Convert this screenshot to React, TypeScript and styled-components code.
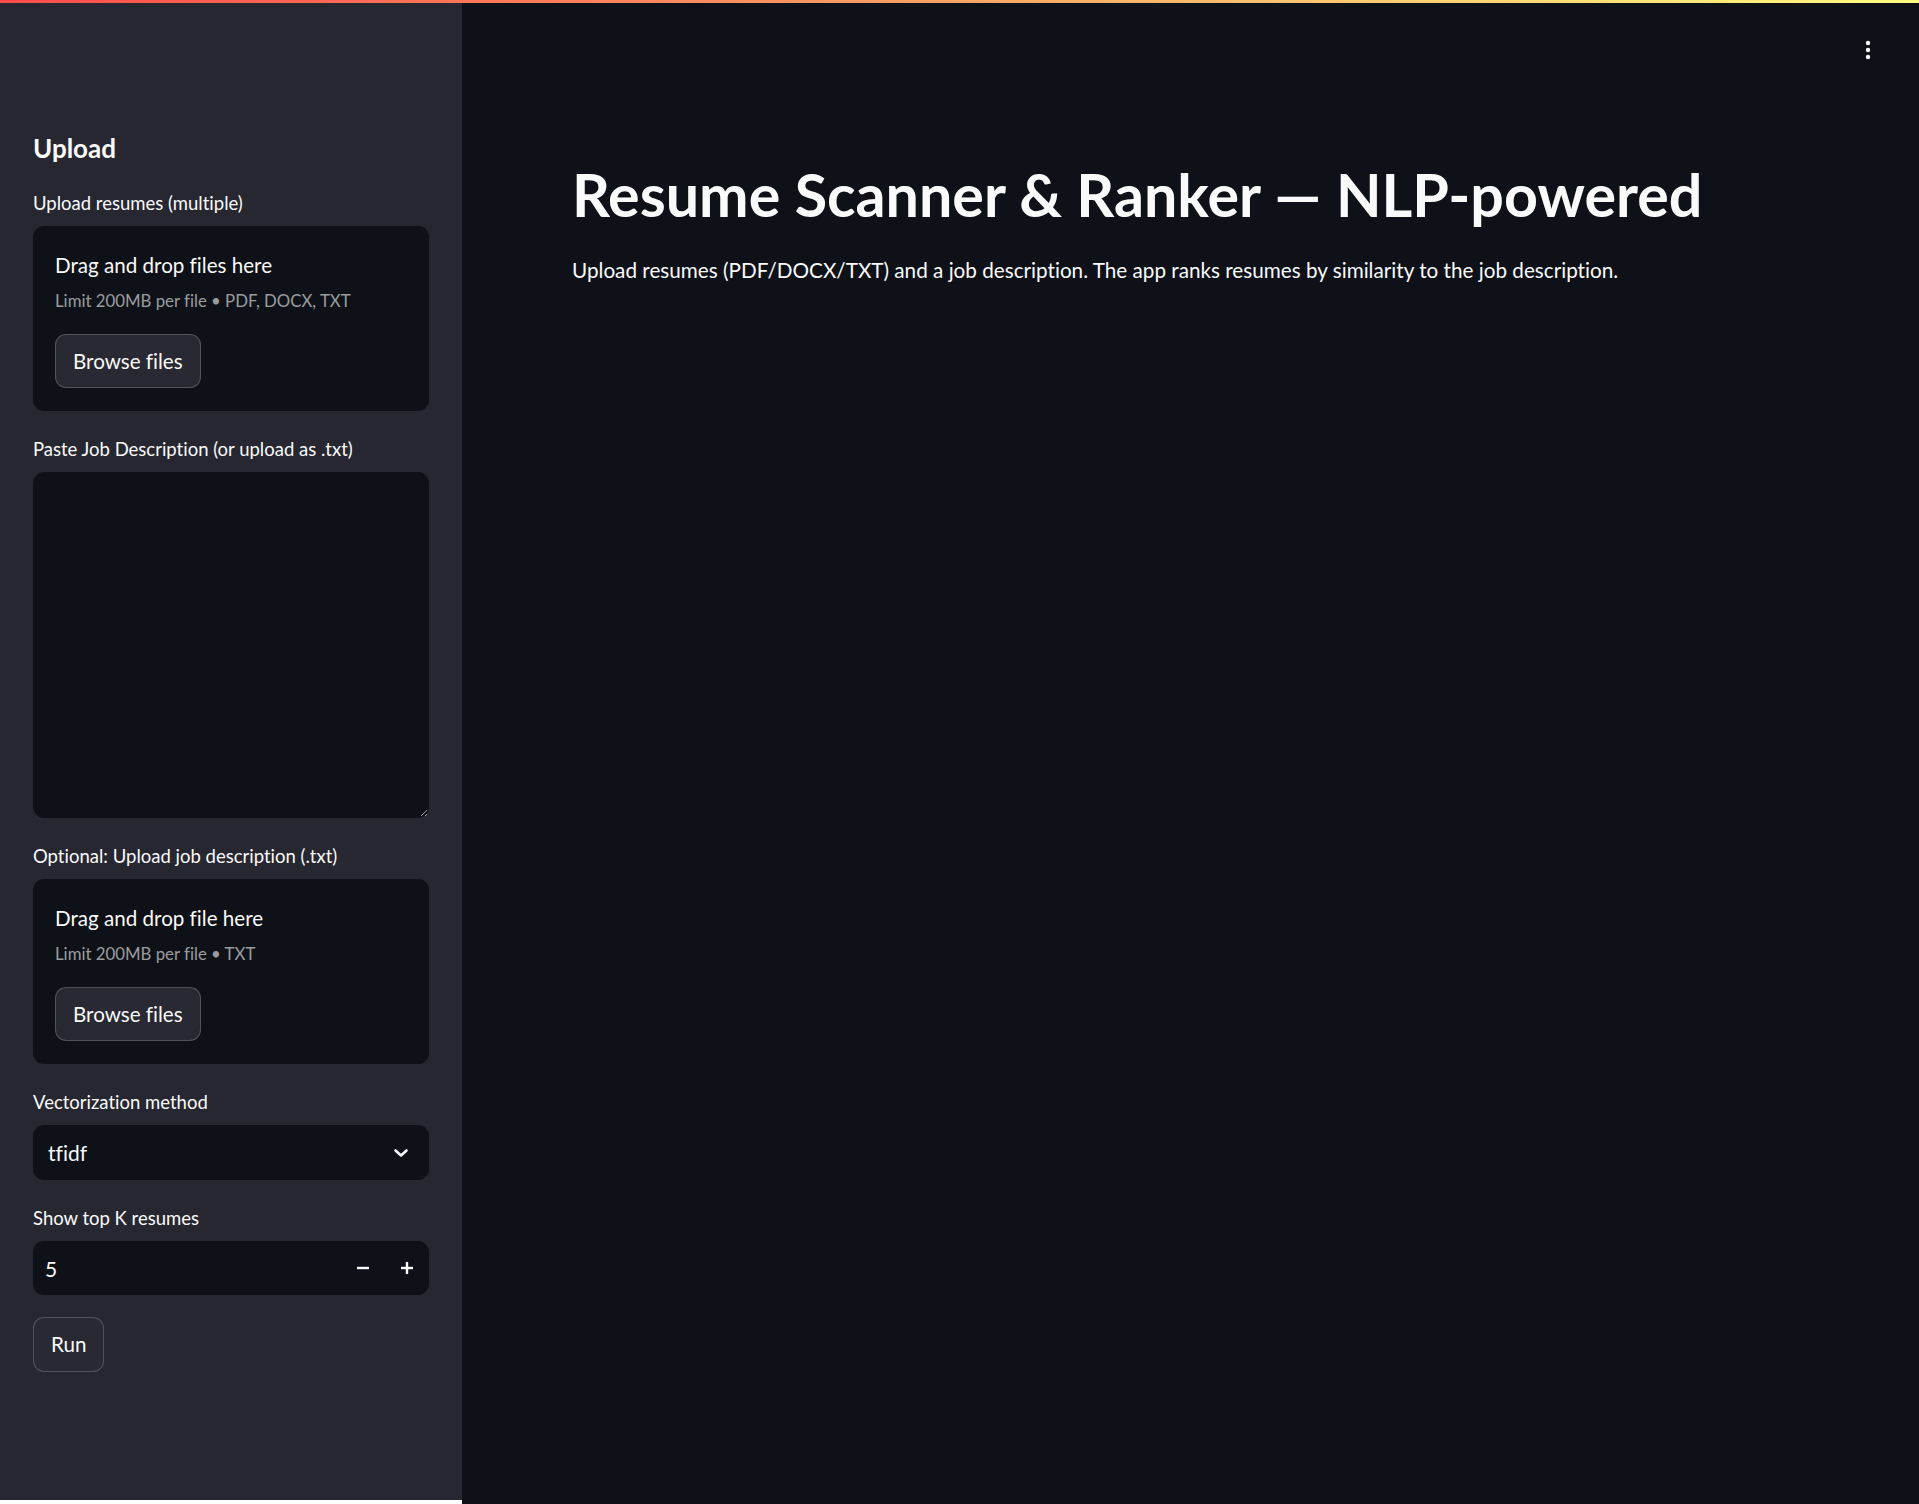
import React from 'react';
import styled, { createGlobalStyle } from 'styled-components';

const GlobalStyle = createGlobalStyle`
  html, body {
    margin: 0;
    padding: 0;
    background: #ffffff;
    overflow: hidden;
  }
  body {
    font-family: Lato, "Noto Sans", sans-serif;
    color: #fafafa;
    font-variant-ligatures: none;
  }
  * {
    box-sizing: border-box;
  }
`;

const Page = styled.div`
  width: 1919px;
  height: 1504px;
  display: flex;
  flex-direction: column;
`;

const Decoration = styled.div`
  height: 3px;
  flex-shrink: 0;
  background: linear-gradient(90deg, #ff4b4b, #fffd80);
`;

const Layout = styled.div`
  flex: 1;
  display: flex;
  align-items: flex-start;
`;

const Sidebar = styled.aside`
  width: 462px;
  height: 1497px;
  flex-shrink: 0;
  background: #262730;
  padding: 129px 33px 0;
  display: flex;
  flex-direction: column;
`;

const SideHeading = styled.h2`
  margin: 0 0 25px;
  font-size: 26px;
  line-height: 32px;
  font-weight: 700;
`;

const Stack = styled.div`
  display: flex;
  flex-direction: column;
  gap: 24px;
`;

const Field = styled.div`
  display: flex;
  flex-direction: column;
`;

const Label = styled.label`
  font-size: 18.5px;
  line-height: 28px;
  margin-bottom: 9px;
  color: #fafafa;
`;

const Dropzone = styled.div`
  height: 185px;
  background: #0e1117;
  border-radius: 11px;
  padding: 24px 22px 23px;
  display: flex;
  flex-direction: column;
  align-items: flex-start;
`;

const DropTitle = styled.div`
  font-size: 20.6px;
  line-height: 30px;
`;

const DropHint = styled.div`
  margin-top: 8px;
  font-size: 16.8px;
  line-height: 26px;
  color: rgba(250, 250, 250, 0.6);
`;

const Button = styled.button<{ $top?: number; $height?: number }>`
  height: ${(p) => p.$height ?? 54}px;
  margin-top: ${(p) => p.$top ?? 0}px;
  padding: 0 17px;
  border-radius: 11px;
  border: 1px solid rgba(250, 250, 250, 0.2);
  background: #282932;
  color: #fafafa;
  font-family: inherit;
  font-variant-ligatures: none;
  font-size: 20.6px;
  line-height: 1;
  cursor: pointer;
  align-self: flex-start;
`;

const TextArea = styled.textarea`
  height: 346px;
  width: 100%;
  resize: vertical;
  background: #0f1119;
  border: 1px solid #0f1119;
  border-radius: 11px;
  color: #fafafa;
  font-family: inherit;
  font-size: 21px;
  padding: 14px 16px;
  outline: none;
  color-scheme: dark;
`;

const Select = styled.div`
  height: 55px;
  background: #0e1117;
  border-radius: 11px;
  padding: 0 18px 0 15px;
  display: flex;
  align-items: center;
  justify-content: space-between;
  font-size: 21px;
`;

const NumberBox = styled.div`
  height: 54px;
  background: #0e1117;
  border-radius: 11px;
  display: flex;
  align-items: center;
  font-size: 21px;
  overflow: hidden;
`;

const NumberValue = styled.div`
  flex: 1;
  padding-left: 12px;
`;

const StepButton = styled.button`
  width: 44px;
  height: 100%;
  border: none;
  background: transparent;
  display: flex;
  align-items: center;
  justify-content: center;
  padding: 0;
  cursor: pointer;
`;

const Main = styled.main`
  flex: 1;
  height: 1501px;
  background: #0e1117;
  display: flex;
  flex-direction: column;
`;

const Toolbar = styled.header`
  height: 94px;
  display: flex;
  align-items: center;
  justify-content: flex-end;
  padding-right: 39px;
`;

const Content = styled.section`
  padding: 0 110px;
`;

const Title = styled.h1`
  margin: 63px 0 0;
  font-size: 59.2px;
  line-height: 69px;
  font-weight: 700;
  color: #fafafa;
  white-space: nowrap;
`;

const Intro = styled.p`
  margin: 24px 0 0;
  font-size: 20.7px;
  line-height: 34px;
  color: #fafafa;
`;

const Chevron = () => (
  <svg width="20" height="20" viewBox="0 0 20 20" fill="none">
    <path d="M4.5 7.5L10 12.5L15.5 7.5" stroke="#fafafa" strokeWidth="2.6" strokeLinecap="round" strokeLinejoin="round" />
  </svg>
);

const Minus = () => (
  <svg width="14" height="14" viewBox="0 0 14 14">
    <rect x="1" y="5.8" width="12" height="2.4" fill="#fafafa" />
  </svg>
);

const Plus = () => (
  <svg width="14" height="14" viewBox="0 0 14 14">
    <rect x="1" y="5.8" width="12" height="2.4" fill="#fafafa" />
    <rect x="5.8" y="1" width="2.4" height="12" fill="#fafafa" />
  </svg>
);

const Kebab = () => (
  <svg width="24" height="24" viewBox="0 0 24 24">
    <circle cx="12" cy="5" r="2.2" fill="#fafafa" />
    <circle cx="12" cy="12" r="2.2" fill="#fafafa" />
    <circle cx="12" cy="19" r="2.2" fill="#fafafa" />
  </svg>
);

const UploadField: React.FC<{ label: string; title: string; hint: string }> = ({ label, title, hint }) => (
  <Field>
    <Label>{label}</Label>
    <Dropzone>
      <DropTitle>{title}</DropTitle>
      <DropHint>{hint}</DropHint>
      <Button $top={20}>Browse files</Button>
    </Dropzone>
  </Field>
);

const App: React.FC = () => {
  return (
    <>
      <GlobalStyle />
      <Page>
        <Decoration />
        <Layout>
          <Sidebar>
            <SideHeading>Upload</SideHeading>
            <Stack>
              <UploadField
                label="Upload resumes (multiple)"
                title="Drag and drop files here"
                hint="Limit 200MB per file • PDF, DOCX, TXT"
              />
              <Field>
                <Label>Paste Job Description (or upload as .txt)</Label>
                <TextArea />
              </Field>
              <UploadField
                label="Optional: Upload job description (.txt)"
                title="Drag and drop file here"
                hint="Limit 200MB per file • TXT"
              />
              <Field>
                <Label>Vectorization method</Label>
                <Select>
                  <span>tfidf</span>
                  <Chevron />
                </Select>
              </Field>
              <Field>
                <Label>Show top K resumes</Label>
                <NumberBox>
                  <NumberValue>5</NumberValue>
                  <StepButton>
                    <Minus />
                  </StepButton>
                  <StepButton>
                    <Plus />
                  </StepButton>
                </NumberBox>
              </Field>
            </Stack>
            <Button $top={22} $height={55}>Run</Button>
          </Sidebar>
          <Main>
            <Toolbar>
              <Kebab />
            </Toolbar>
            <Content>
              <Title>Resume Scanner &amp; Ranker — NLP-powered</Title>
              <Intro>
                Upload resumes (PDF/DOCX/TXT) and a job description. The app ranks resumes by similarity to the job
                description.
              </Intro>
            </Content>
          </Main>
        </Layout>
      </Page>
    </>
  );
};

export default App;
